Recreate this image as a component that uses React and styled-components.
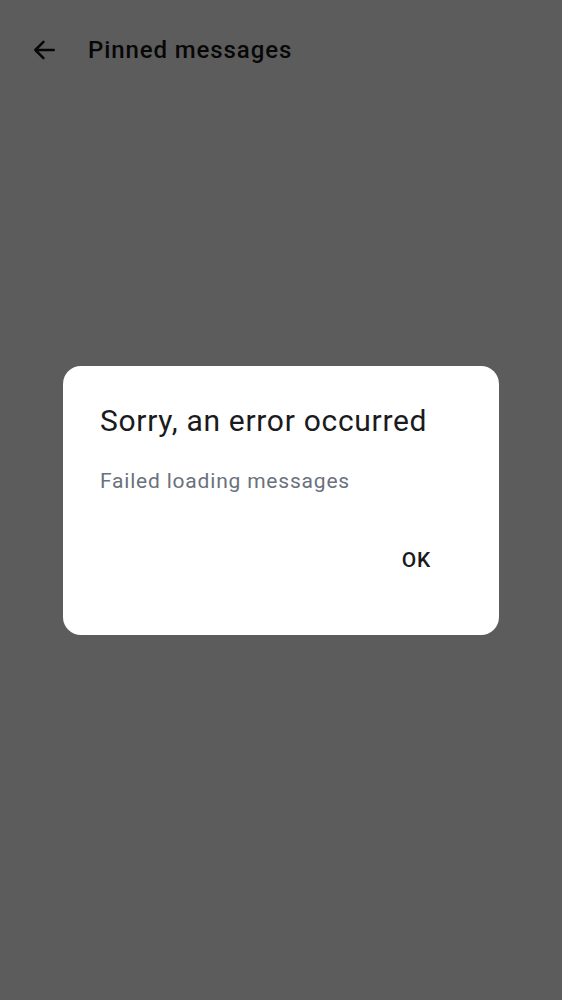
import React from "react";
import styled, { createGlobalStyle } from "styled-components";

const Global = createGlobalStyle`
  html, body { margin: 0; padding: 0; background: #ffffff; }
  body { font-family: Roboto, "Noto Sans", "Liberation Sans", sans-serif; }
  #root { min-height: 100vh; }
`;

const Screen = styled.div`
  min-height: 100vh;
  background: #ffffff;
  display: flex;
  flex-direction: column;
`;

const Header = styled.header`
  height: 100px;
  display: flex;
  align-items: center;
  padding: 0 0 0 30px;
  gap: 30px;
  background: #ffffff;
  box-shadow: 0 1px 2px rgba(0, 0, 0, 0.02);
`;

const BackButton = styled.button`
  width: 28px;
  height: 28px;
  padding: 0;
  border: 0;
  background: transparent;
  display: flex;
  align-items: center;
  justify-content: center;
  color: #111111;
`;

const Title = styled.h1`
  margin: 0;
  font-family: Roboto, "Noto Sans", sans-serif;
  font-size: 24px;
  font-weight: 500;
  color: #161616;
  letter-spacing: 0.9px;
`;

const Scrim = styled.div`
  position: fixed;
  inset: 0;
  background: rgba(0, 0, 0, 0.64);
  display: flex;
  align-items: center;
  justify-content: center;
`;

const Dialog = styled.div`
  width: 436px;
  box-sizing: border-box;
  background: #ffffff;
  border-radius: 18px;
  padding: 37px 36px 51px 37px;
  display: flex;
  flex-direction: column;
`;

const DialogTitle = styled.h2`
  margin: 0;
  font-family: Roboto, "Noto Sans", sans-serif;
  font-size: 30px;
  line-height: 36px;
  font-weight: 400;
  color: #1a1b20;
  letter-spacing: 0.7px;
`;

const DialogBody = styled.p`
  margin: 28px 0 0 0;
  font-family: Roboto, "Noto Sans", sans-serif;
  font-size: 21px;
  line-height: 28px;
  font-weight: 400;
  color: #6b717d;
  letter-spacing: 0.8px;
`;

const Actions = styled.div`
  margin-top: 41px;
  display: flex;
  justify-content: flex-end;
`;

const TextButton = styled.button`
  border: 0;
  background: transparent;
  padding: 10px 32px 10px 32px;
  font-family: Roboto, "Noto Sans", sans-serif;
  font-size: 21px;
  line-height: 28px;
  font-weight: 500;
  color: #1a1b20;
  letter-spacing: 0.8px;
`;

function ArrowBack() {
  return (
    <svg width="26" height="26" viewBox="0 0 24 24" fill="none">
      <path
        d="M21 12H4M11.5 4.5L4 12l7.5 7.5"
        stroke="currentColor"
        strokeWidth="2.3"
        strokeLinecap="round"
        strokeLinejoin="round"
      />
    </svg>
  );
}

export default function App() {
  return (
    <>
      <Global />
      <Screen>
        <Header>
          <BackButton aria-label="Back">
            <ArrowBack />
          </BackButton>
          <Title>Pinned messages</Title>
        </Header>
      </Screen>
      <Scrim>
        <Dialog role="dialog">
          <DialogTitle>Sorry, an error occurred</DialogTitle>
          <DialogBody>Failed loading messages</DialogBody>
          <Actions>
            <TextButton>OK</TextButton>
          </Actions>
        </Dialog>
      </Scrim>
    </>
  );
}
